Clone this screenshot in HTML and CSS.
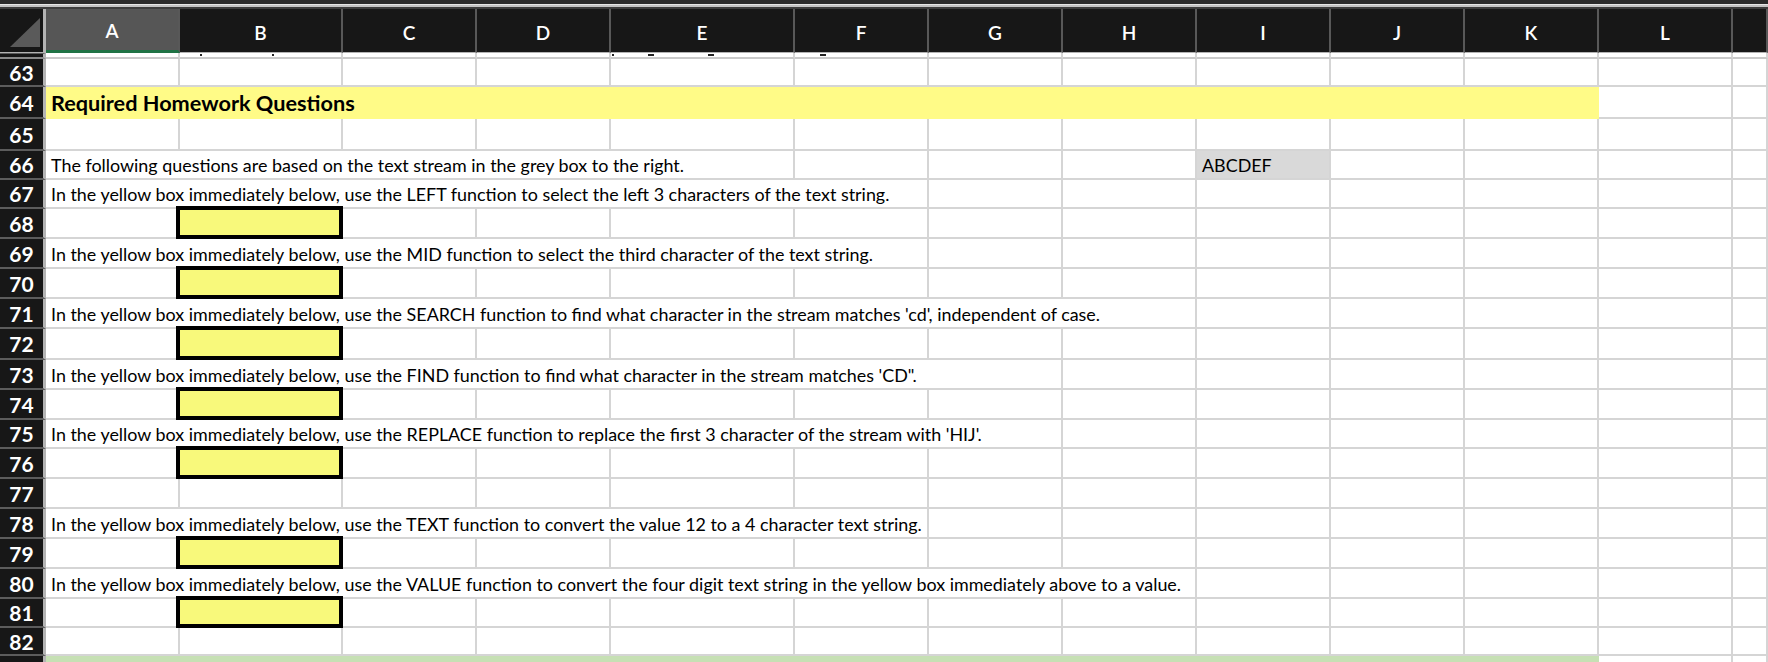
FILE: index.html
```html
<!DOCTYPE html>
<html lang="en">

<head>
    <meta charset="UTF-8">
    <meta name="viewport" content="width=device-width, initial-scale=1.0">
    <title>Homework - Text Functions</title>
    <link rel="stylesheet" href="styles.css">
</head>

<body>
    <div class="window-bar"></div>

    <div class="sheet">
        <!-- column headers -->
        <div class="row head">
            <div class="corner">
                <svg width="43" height="43" viewBox="0 0 43 43"><polygon points="10,38 40,38 40,9" fill="#5a5a5a" /></svg>
            </div>
            <div class="colhead sel">A</div>
            <div class="colhead">B</div>
            <div class="colhead">C</div>
            <div class="colhead">D</div>
            <div class="colhead">E</div>
            <div class="colhead">F</div>
            <div class="colhead">G</div>
            <div class="colhead">H</div>
            <div class="colhead">I</div>
            <div class="colhead">J</div>
            <div class="colhead">K</div>
            <div class="colhead">L</div>
            <div class="colhead"></div>
        </div>

        <!-- bottom edge of row 62 under the frozen pane -->
        <div class="row sliver">
            <div class="num"></div>
            <div class="cell"></div>
            <div class="cell"><span class="mark dot b1"></span><span class="mark dot b2"></span></div>
            <div class="cell"></div>
            <div class="cell"></div>
            <div class="cell"><span class="mark dot e1"></span><span class="mark dash e2"></span><span class="mark dash e3"></span></div>
            <div class="cell"><span class="mark dash f1"></span></div>
            <div class="cell"></div>
            <div class="cell"></div>
            <div class="cell"></div>
            <div class="cell"></div>
            <div class="cell"></div>
            <div class="cell"></div>
            <div class="cell"></div>
        </div>

        <div class="row h28">
            <div class="num">63</div>
            <div class="cell"></div><div class="cell"></div><div class="cell"></div><div class="cell"></div>
            <div class="cell"></div><div class="cell"></div><div class="cell"></div><div class="cell"></div>
            <div class="cell"></div><div class="cell"></div><div class="cell"></div><div class="cell"></div>
            <div class="cell"></div>
        </div>

        <div class="row h32">
            <div class="num">64</div>
            <div class="cell band title">Required Homework Questions</div>
            <div class="cell"></div><div class="cell"></div>
        </div>

        <div class="row h32">
            <div class="num">65</div>
            <div class="cell"></div><div class="cell"></div><div class="cell"></div><div class="cell"></div>
            <div class="cell"></div><div class="cell"></div><div class="cell"></div><div class="cell"></div>
            <div class="cell"></div><div class="cell"></div><div class="cell"></div><div class="cell"></div>
            <div class="cell"></div>
        </div>

        <div class="row h29">
            <div class="num">66</div>
            <div class="cell span5">The following questions are based on the text stream in the grey box to the right.</div>
            <div class="cell"></div><div class="cell"></div><div class="cell"></div>
            <div class="cell source">ABCDEF</div>
            <div class="cell"></div><div class="cell"></div><div class="cell"></div><div class="cell"></div>
        </div>

        <div class="row h29">
            <div class="num">67</div>
            <div class="cell span6">In the yellow box immediately below, use the LEFT function to select the left 3 characters of the text string.</div>
            <div class="cell"></div><div class="cell"></div><div class="cell"></div><div class="cell"></div>
            <div class="cell"></div><div class="cell"></div><div class="cell"></div>
        </div>

        <div class="row h30">
            <div class="num">68</div>
            <div class="cell"></div><div class="cell answer"></div>
            <div class="cell"></div><div class="cell"></div><div class="cell"></div><div class="cell"></div>
            <div class="cell"></div><div class="cell"></div><div class="cell"></div><div class="cell"></div>
            <div class="cell"></div><div class="cell"></div><div class="cell"></div>
        </div>

        <div class="row h30">
            <div class="num">69</div>
            <div class="cell span6">In the yellow box immediately below, use the MID function to select the third character of the text string.</div>
            <div class="cell"></div><div class="cell"></div><div class="cell"></div><div class="cell"></div>
            <div class="cell"></div><div class="cell"></div><div class="cell"></div>
        </div>

        <div class="row h30">
            <div class="num">70</div>
            <div class="cell"></div><div class="cell answer"></div>
            <div class="cell"></div><div class="cell"></div><div class="cell"></div><div class="cell"></div>
            <div class="cell"></div><div class="cell"></div><div class="cell"></div><div class="cell"></div>
            <div class="cell"></div><div class="cell"></div><div class="cell"></div>
        </div>

        <div class="row h30">
            <div class="num">71</div>
            <div class="cell span8">In the yellow box immediately below, use the SEARCH function to find what character in the stream matches 'cd', independent of case.</div>
            <div class="cell"></div><div class="cell"></div><div class="cell"></div><div class="cell"></div>
            <div class="cell"></div>
        </div>

        <div class="row h31">
            <div class="num">72</div>
            <div class="cell"></div><div class="cell answer"></div>
            <div class="cell"></div><div class="cell"></div><div class="cell"></div><div class="cell"></div>
            <div class="cell"></div><div class="cell"></div><div class="cell"></div><div class="cell"></div>
            <div class="cell"></div><div class="cell"></div><div class="cell"></div>
        </div>

        <div class="row h30">
            <div class="num">73</div>
            <div class="cell span7">In the yellow box immediately below, use the FIND function to find what character in the stream matches 'CD".</div>
            <div class="cell"></div><div class="cell"></div><div class="cell"></div><div class="cell"></div>
            <div class="cell"></div><div class="cell"></div>
        </div>

        <div class="row h30">
            <div class="num">74</div>
            <div class="cell"></div><div class="cell answer"></div>
            <div class="cell"></div><div class="cell"></div><div class="cell"></div><div class="cell"></div>
            <div class="cell"></div><div class="cell"></div><div class="cell"></div><div class="cell"></div>
            <div class="cell"></div><div class="cell"></div><div class="cell"></div>
        </div>

        <div class="row h29">
            <div class="num">75</div>
            <div class="cell span7">In the yellow box immediately below, use the REPLACE function to replace the first 3 character of the stream with 'HIJ'.</div>
            <div class="cell"></div><div class="cell"></div><div class="cell"></div><div class="cell"></div>
            <div class="cell"></div><div class="cell"></div>
        </div>

        <div class="row h30">
            <div class="num">76</div>
            <div class="cell"></div><div class="cell answer"></div>
            <div class="cell"></div><div class="cell"></div><div class="cell"></div><div class="cell"></div>
            <div class="cell"></div><div class="cell"></div><div class="cell"></div><div class="cell"></div>
            <div class="cell"></div><div class="cell"></div><div class="cell"></div>
        </div>

        <div class="row h30">
            <div class="num">77</div>
            <div class="cell"></div><div class="cell"></div><div class="cell"></div><div class="cell"></div>
            <div class="cell"></div><div class="cell"></div><div class="cell"></div><div class="cell"></div>
            <div class="cell"></div><div class="cell"></div><div class="cell"></div><div class="cell"></div>
            <div class="cell"></div>
        </div>

        <div class="row h30">
            <div class="num">78</div>
            <div class="cell span6">In the yellow box immediately below, use the TEXT function to convert the value 12 to a 4 character text string.</div>
            <div class="cell"></div><div class="cell"></div><div class="cell"></div><div class="cell"></div>
            <div class="cell"></div><div class="cell"></div><div class="cell"></div>
        </div>

        <div class="row h30">
            <div class="num">79</div>
            <div class="cell"></div><div class="cell answer"></div>
            <div class="cell"></div><div class="cell"></div><div class="cell"></div><div class="cell"></div>
            <div class="cell"></div><div class="cell"></div><div class="cell"></div><div class="cell"></div>
            <div class="cell"></div><div class="cell"></div><div class="cell"></div>
        </div>

        <div class="row h30">
            <div class="num">80</div>
            <div class="cell span8">In the yellow box immediately below, use the VALUE function to convert the four digit text string in the yellow box immediately above to a value.</div>
            <div class="cell"></div><div class="cell"></div><div class="cell"></div><div class="cell"></div>
            <div class="cell"></div>
        </div>

        <div class="row h29">
            <div class="num">81</div>
            <div class="cell"></div><div class="cell answer"></div>
            <div class="cell"></div><div class="cell"></div><div class="cell"></div><div class="cell"></div>
            <div class="cell"></div><div class="cell"></div><div class="cell"></div><div class="cell"></div>
            <div class="cell"></div><div class="cell"></div><div class="cell"></div>
        </div>

        <div class="row h28">
            <div class="num">82</div>
            <div class="cell"></div><div class="cell"></div><div class="cell"></div><div class="cell"></div>
            <div class="cell"></div><div class="cell"></div><div class="cell"></div><div class="cell"></div>
            <div class="cell"></div><div class="cell"></div><div class="cell"></div><div class="cell"></div>
            <div class="cell"></div>
        </div>

        <div class="row h30">
            <div class="num"></div>
            <div class="cell band green"></div>
            <div class="cell"></div><div class="cell"></div>
        </div>
    </div>
</body>

</html>
```

FILE: styles.css
```css
/* page */
* {
    box-sizing: border-box;
}

html,
body {
    margin: 0;
    padding: 0;
}

body {
    width: 1768px;
    height: 662px;
    overflow: hidden;
    background-color: #fff;
    color: #000;
    font-family: Lato, "Liberation Sans", sans-serif;
}

/* strip of the window above the sheet */
.window-bar {
    height: 9px;
    background: linear-gradient(#2b2b2b 0 4px, #e6e6e6 4px 5px, #c3c3c3 5px 7px, #3d3d3d 7px 9px);
}

/* grid rows */
.row {
    display: grid;
    grid-template-columns: 46px 134px 163px 134px 134px 184px 134px 134px 134px 134px 134px 134px 134px 35px;
}

.head { height: 44px; }
.sliver { height: 6px; }
.h28 { height: 28px; }
.h29 { height: 29px; }
.h30 { height: 30px; }
.h31 { height: 31px; }
.h32 { height: 32px; }

/* column headers */
.corner {
    background-color: #171717;
    border-right: 3px solid #b4b4b4;
    border-bottom: 1px solid #b4b4b4;
}

.corner svg {
    display: block;
}

.colhead {
    display: flex;
    align-items: center;
    justify-content: center;
    padding-top: 4px;
    background-color: #171717;
    color: #fff;
    border-right: 2px solid #585858;
    border-bottom: 1px solid #b4b4b4;
    font-size: 19px;
    font-weight: 600;
}

.colhead.sel {
    background-color: #565656;
    border-bottom: 3px solid #1f7244;
    padding-top: 2px;
}

/* row numbers */
.num {
    display: flex;
    align-items: center;
    justify-content: center;
    background-color: #171717;
    color: #fff;
    border-right: 3px solid #b4b4b4;
    border-bottom: 2px solid #5c5c5c;
    font-size: 21px;
    font-weight: 700;
    line-height: 1;
}

/* cells */
.cell {
    position: relative;
    display: flex;
    align-items: flex-end;
    padding: 0 5px 2px;
    border-right: 2px solid #d5d5d5;
    border-bottom: 2px solid #d5d5d5;
    white-space: nowrap;
    font-size: 17.9px;
}

.span5 { grid-column: span 5; }
.span6 { grid-column: span 6; }
.span7 { grid-column: span 7; }
.span8 { grid-column: span 8; }

.band {
    grid-column: span 11;
    background-color: #fffb87;
    border-color: #fffb87;
}

.band.green {
    background-color: #c6e0b4;
    border-color: #c6e0b4;
}

.title {
    font-size: 21.7px;
    font-weight: 700;
    padding-bottom: 1px;
}

.source {
    background-color: #d9d9d9;
}

/* yellow answer boxes with a thick black border */
.answer::before {
    content: "";
    position: absolute;
    left: -4px;
    top: -3px;
    right: -2px;
    bottom: -2px;
    border: 4px solid #000;
    background-color: #f8f97b;
}

/* descenders of row 62 peeking out under the frozen pane */
.sliver .num {
    border-top: 1px solid #5c5c5c;
    border-bottom-color: #8c8c8c;
}

.sliver .cell {
    align-items: flex-start;
    padding: 0;
    border-bottom-color: #c9c9c9;
}

.mark {
    display: block;
    height: 2px;
    margin-top: 1px;
    background-color: #222;
}

.dot { width: 2px; }
.dash { width: 6px; }

.b1 { margin-left: 20px; }
.b2 { margin-left: 70px; }
.e1 { margin-left: 1px; }
.e2 { margin-left: 34px; }
.e3 { margin-left: 54px; }
.f1 { margin-left: 25px; }
```
